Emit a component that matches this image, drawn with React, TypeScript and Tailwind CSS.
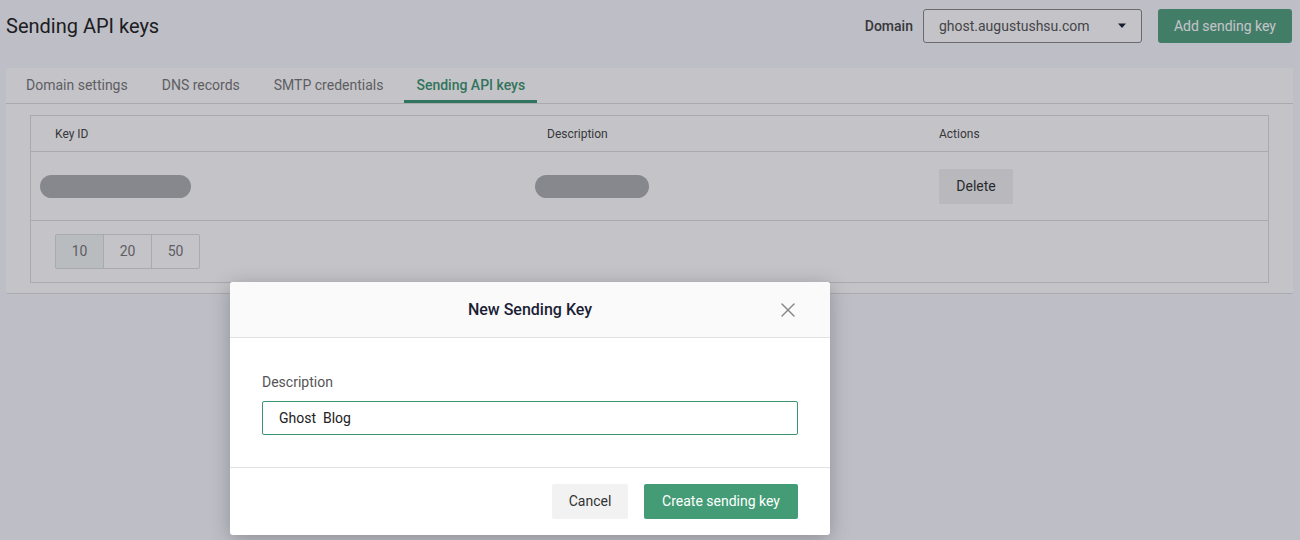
import { X } from "lucide-react";

const PAGE_SIZES = ["10", "20", "50"];
const TABS = ["Domain settings", "DNS records", "SMTP credentials", "Sending API keys"];

export default function App() {
  return (
    <div className="relative h-[540px] w-[1300px] overflow-hidden bg-[#f7f8fc] font-['Roboto',sans-serif] text-[#333]">
      {/* page */}
      <div className="flex items-center justify-between pl-[6px] pr-[8px] pt-[9px]">
        <h1 className="text-[20px] font-normal text-[#222]">Sending API keys</h1>
        <div className="flex items-center">
          <span className="mr-[10px] text-[14px] font-medium text-[#444]">Domain</span>
          <div className="flex h-[34px] w-[219px] items-center justify-between rounded-[3px] border border-[#888] bg-white pl-[15px] pr-[14px] text-[14px] text-[#555]">
            <span>ghost.augustushsu.com</span>
            <svg width="10" height="6" viewBox="0 0 10 6">
              <path d="M1 0.5h8L5 5z" fill="#1a1f36" />
            </svg>
          </div>
          <button className="ml-[16px] h-[34px] rounded-[3px] bg-[#52a07f] px-[16px] text-[14px] font-normal text-white">
            Add sending key
          </button>
        </div>
      </div>

      <div className="ml-[6px] mr-[7px] mt-[25px] rounded-[2px] border-b border-[#ddd] bg-white pb-[10px]">
        <div className="flex h-[36px] border-b border-[#ddd] pl-[3px]">
          {TABS.map((t, i) => (
            <div
              key={t}
              className={
                i === 3
                  ? "ml-[4px] flex items-center border-b-[3px] border-[#3d9470] px-[12px] pt-[3px] text-[14px] font-medium text-[#3d9470]"
                  : "flex items-center px-[17px] text-[14px] font-normal text-[#777]"
              }
            >
              {t}
            </div>
          ))}
        </div>

        <div className="mx-[24px] mt-[11px] border border-[#ddd]">
          <div className="grid h-[36px] grid-cols-[492px_392px_1fr] items-center border-b border-[#ddd] text-[12px] text-[#444]">
            <div className="pl-[24px]">Key ID</div>
            <div className="pl-[24px]">Description</div>
            <div className="pl-[24px]">Actions</div>
          </div>
          <div className="grid h-[69px] grid-cols-[492px_392px_1fr] items-center border-b border-[#ddd]">
            <div className="pl-[9px]">
              <div className="h-[23px] w-[151px] rounded-full bg-[#aeaeb2]" />
            </div>
            <div className="pl-[12px]">
              <div className="h-[23px] w-[114px] rounded-full bg-[#aeaeb2]" />
            </div>
            <div className="pl-[24px]">
              <button className="h-[35px] w-[74px] rounded-[2px] bg-[#f0f0f0] text-[14px] font-normal text-[#333]">
                Delete
              </button>
            </div>
          </div>
          <div className="flex h-[61px] items-center pl-[24px]">
            <div className="flex h-[35px] rounded-[2px] border border-[#ddd]">
              {PAGE_SIZES.map((s, i) => (
                <div
                  key={s}
                  className={
                    i === 0
                      ? "flex w-[47px] items-center justify-center bg-[#f0f5f3] text-[14px] text-[#777]"
                      : "flex w-[48px] items-center justify-center border-l border-[#ddd] text-[14px] text-[#777]"
                  }
                >
                  {s}
                </div>
              ))}
            </div>
          </div>
        </div>
      </div>

      {/* overlay */}
      <div className="absolute inset-0 bg-[rgba(20,20,35,0.25)]" />

      {/* modal */}
      <div className="absolute left-[230px] top-[282px] w-[600px] rounded-[3px] bg-white shadow-[0_4px_20px_rgba(0,0,0,0.25)]">
        <div className="relative flex h-[56px] items-center justify-center rounded-t-[3px] border-b border-[#e2e2e2] bg-[#fafafa]">
          <span className="text-[16px] font-medium text-[#1a1f36]">New Sending Key</span>
          <X className="absolute right-[30px] top-[16px] h-[24px] w-[24px] text-[#888]" strokeWidth={1.5} />
        </div>
        <div className="border-b border-[#e2e2e2] px-[32px] pb-[32px] pt-[34px]">
          <div className="mb-[8px] text-[14px] font-normal text-[#555]">Description</div>
          <div className="flex h-[34px] items-center rounded-[2px] border border-[#3d9470] px-[16px] text-[14px] text-[#222]">
            Ghost&nbsp; Blog
          </div>
        </div>
        <div className="flex justify-end gap-[16px] px-[32px] pb-[16px] pt-[16px]">
          <button className="h-[35px] w-[76px] rounded-[2px] bg-[#f2f2f2] text-[14px] font-normal text-[#333]">
            Cancel
          </button>
          <button className="h-[35px] w-[154px] rounded-[2px] bg-[#449c76] text-[14px] font-normal text-white">
            Create sending key
          </button>
        </div>
      </div>
    </div>
  );
}
